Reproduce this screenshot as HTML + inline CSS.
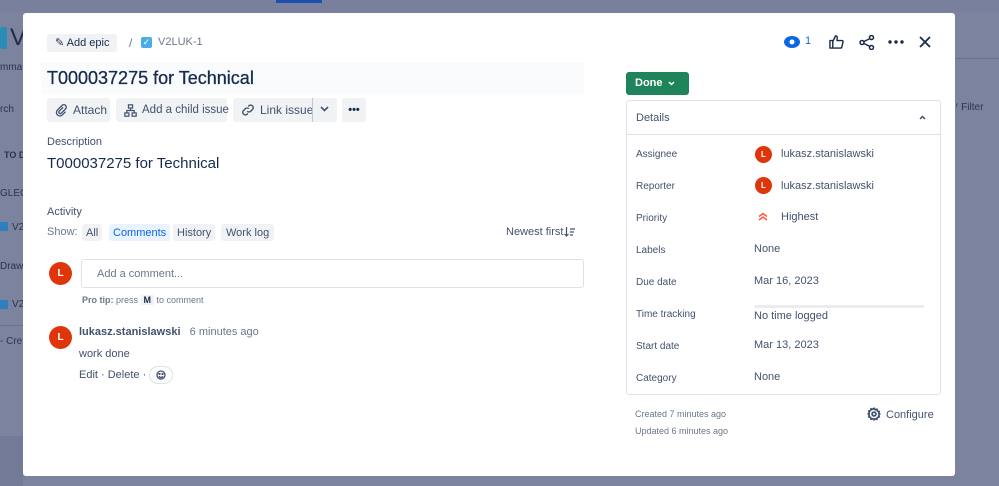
<!DOCTYPE html>
<html><head><style>
*{margin:0;padding:0;box-sizing:border-box}
body{width:999px;height:486px;overflow:hidden;background:#7c839f;font-family:"Liberation Sans",sans-serif;position:relative;color:#172b4d}
.a{position:absolute;white-space:nowrap}
.bg{color:#2a3350}
.modal{position:absolute;left:23px;top:13px;width:932px;height:463px;background:#fff;border-radius:3px}
.btn{position:absolute;background:#f1f2f4;border-radius:3px;font-size:12px;color:#42526e;height:24px;line-height:24px;white-space:nowrap;display:flex;align-items:center;gap:5px}
.btn svg{flex:none}
.lbl{position:absolute;left:636px;font-size:10px;color:#42526e}
.val{position:absolute;left:754px;font-size:11px;color:#42526e}
.av{position:absolute;width:17px;height:17px;border-radius:50%;background:#de350b;color:#fff;font-size:8px;font-weight:bold;text-align:center;line-height:17px}
</style></head><body>
<div class="a" style="left:0;top:0;width:999px;height:12px;background:#79809d"></div>
<div class="a" style="left:276px;top:0;width:46px;height:3px;background:#1d4fb0"></div>
<div class="a" style="left:0;top:27px;width:7px;height:22px;background:#2b8cb5;border-radius:2px"></div>
<div class="a bg" style="left:10px;top:24px;font-size:24px;color:#1f2a48">V</div>
<div class="a bg" style="left:0;top:62px;font-size:10px">mma</div>
<div class="a bg" style="left:0;top:104px;font-size:10px">rch</div>
<div class="a bg" style="left:4px;top:150px;font-size:9px;font-weight:bold">TO D</div>
<div class="a bg" style="left:0;top:188px;font-size:10px">GLEG</div>
<div class="a" style="left:0;top:222px;width:8px;height:9px;background:#2f7fc0"></div>
<div class="a bg" style="left:12px;top:222px;font-size:10px">V2</div>
<div class="a bg" style="left:0;top:261px;font-size:10px">Drawi</div>
<div class="a" style="left:0;top:300px;width:8px;height:9px;background:#2f7fc0"></div>
<div class="a bg" style="left:12px;top:299px;font-size:10px">V2</div>
<div class="a bg" style="left:0;top:336px;font-size:10px">- Cre</div>
<div class="a" style="left:0;top:325px;width:23px;height:1px;background:#6b7290"></div>
<div class="a" style="left:955px;top:58px;width:44px;height:1px;background:#6b7290"></div>
<div class="a bg" style="left:956px;top:102px;font-size:10px">ʳ Filter</div>
<div class="a" style="left:0;top:436px;width:23px;height:50px;background:#737a98"></div>

<div class="modal"></div>
<div class="btn" style="left:47px;top:34px;height:18px;padding:0 8px;font-size:11px;color:#172b4d">✎ Add epic</div>
<div class="a" style="left:129px;top:36px;font-size:12px;color:#6b778c">/</div>
<div class="a" style="left:141px;top:37px;width:11px;height:11px;background:#4bade8;border-radius:2px;color:#fff;font-size:9px;line-height:11px;text-align:center">✓</div>
<div class="a" style="left:158px;top:36px;font-size:11px;color:#6b778c">V2LUK-1</div>
<div class="a" style="left:41px;top:63px;width:543px;height:31px;background:#fafbfc"></div>
<div class="a" style="left:47px;top:68px;font-size:18px;color:#172b4d;-webkit-text-stroke:0.3px #172b4d">T000037275 for Technical</div>
<div class="btn" style="left:47px;top:98px;width:63px;padding-left:8px"><svg width="13" height="13" viewBox="0 0 16 16" fill="none" stroke="#42526e" stroke-width="1.6"><path d="M10 4L5 9a1.8 1.8 0 002.5 2.5l5.5-5.5a3 3 0 00-4.3-4.3L3 7.5a4.2 4.2 0 006 6l4-4"/></svg>Attach</div>
<div class="btn" style="left:116px;top:98px;width:111px;padding-left:8px;font-size:11.5px"><svg width="13" height="13" viewBox="0 0 16 16" fill="none" stroke="#42526e" stroke-width="1.5"><rect x="5.5" y="1" width="5" height="4"/><rect x="1" y="11" width="5" height="4"/><rect x="10" y="11" width="5" height="4"/><path d="M8 5v3M3.5 11V8h9v3"/></svg>Add a child issue</div>
<div class="btn" style="left:233px;top:98px;width:104px;padding-left:8px"><svg width="14" height="14" viewBox="0 0 16 16" fill="none" stroke="#42526e" stroke-width="1.6"><path d="M7 9.5a3 3 0 004 0l2.5-2.5a3 3 0 00-4-4.2L8.3 4M9 6.5a3 3 0 00-4 0L2.5 9a3 3 0 004 4.2L7.7 12"/></svg>Link issue</div>
<div class="a" style="left:312px;top:98px;width:1px;height:24px;background:#c1c7d0"></div>
<svg class="a" style="left:320px;top:106px" width="9" height="6" fill="none" stroke="#42526e" stroke-width="1.6"><path d="M1 1l3.5 3.5L8 1"/></svg>
<div class="btn" style="left:342px;top:98px;width:24px;justify-content:center;font-weight:bold;color:#172b4d;font-size:11px">•••</div>
<div class="a" style="left:47px;top:136px;font-size:11px;color:#42526e">Description</div>
<div class="a" style="left:47px;top:155px;font-size:15px;color:#172b4d">T000037275 for Technical</div>
<div class="a" style="left:47px;top:206px;font-size:11px;color:#42526e">Activity</div>
<div class="a" style="left:47px;top:226px;font-size:11px;color:#6b778c">Show:</div>
<div class="btn" style="left:82px;top:224px;height:17px;padding:0 4px;font-size:11px">All</div>
<div class="btn" style="left:109px;top:224px;height:17px;padding:0 4px;font-size:11px;background:#e9f2ff;color:#0c66e4">Comments</div>
<div class="btn" style="left:173px;top:224px;height:17px;padding:0 4px;font-size:11px">History</div>
<div class="btn" style="left:221px;top:224px;height:17px;padding:0 5px;font-size:11px">Work log</div>
<div class="a" style="left:506px;top:226px;font-size:11px;color:#42526e">Newest first</div>
<svg class="a" style="left:564px;top:227px" width="11" height="10" fill="none" stroke="#42526e" stroke-width="1.2"><path d="M2.5 0v9M0.5 7l2 2 2-2M6 2h5M6 5h4M6 8h3"/></svg>
<div class="av" style="left:49px;top:262px;width:23px;height:23px;line-height:23px;font-size:10px">L</div>
<div class="a" style="left:81px;top:259px;width:503px;height:29px;border:1px solid #dfe1e6;border-radius:3px"></div>
<div class="a" style="left:97px;top:268px;font-size:11px;color:#6b778c">Add a comment...</div>
<div class="a" style="left:82px;top:295px;font-size:9px;color:#6b778c"><b>Pro tip:</b> press <span style="background:#f1f2f4;padding:0 3px;font-weight:bold;color:#172b4d">M</span> to comment</div>
<div class="av" style="left:49px;top:326px;width:23px;height:23px;line-height:23px;font-size:10px">L</div>
<div class="a" style="left:79px;top:326px;font-size:11px;color:#42526e"><b>lukasz.stanislawski</b>&nbsp;&nbsp; <span style="color:#6b778c">6 minutes ago</span></div>
<div class="a" style="left:79px;top:348px;font-size:11px;color:#42526e">work done</div>
<div class="a" style="left:79px;top:369px;font-size:11px;color:#42526e">Edit · Delete ·</div>
<div class="a" style="left:149px;top:366px;width:24px;height:18px;border:1px solid #dfe1e6;border-radius:9px"></div>
<svg class="a" style="left:156px;top:370px" width="10" height="10" fill="none" stroke="#42526e" stroke-width="1.3"><circle cx="5" cy="5" r="4"/><path d="M3 6.2a2.2 2.2 0 004 0"/><circle cx="3.5" cy="4" r=".5"/><circle cx="6.5" cy="4" r=".5"/></svg>

<svg class="a" style="left:784px;top:35px" width="18" height="14"><ellipse cx="8" cy="7" rx="8" ry="6" fill="#0c66e4"/><circle cx="8" cy="7" r="2.5" fill="#fff"/></svg>
<div class="a" style="left:805px;top:35px;font-size:11px;color:#0c66e4">1</div>
<svg class="a" style="left:829px;top:34px" width="15" height="15" viewBox="0 0 16 16" fill="none" stroke="#172b4d" stroke-width="1.5" stroke-linejoin="round"><path d="M1 7h3v8H1zM4 8l3-6c1.5 0 2 1 1.8 2.5L8.5 7H14a1 1 0 011 1.2l-1.3 5.6a1.5 1.5 0 01-1.5 1.2H4"/></svg>
<svg class="a" style="left:859px;top:35px" width="16" height="15" fill="none" stroke="#172b4d" stroke-width="1.5"><circle cx="3" cy="7.5" r="2"/><circle cx="12.5" cy="2.5" r="2"/><circle cx="12.5" cy="12.5" r="2"/><path d="M5 6.5l6-3M5 8.5l6 3"/></svg>
<svg class="a" style="left:888px;top:40px" width="16" height="4" fill="#172b4d"><circle cx="2" cy="2" r="1.7"/><circle cx="8" cy="2" r="1.7"/><circle cx="14" cy="2" r="1.7"/></svg>
<svg class="a" style="left:919px;top:36px" width="12" height="12" stroke="#172b4d" stroke-width="1.8"><path d="M1 1l10 10M11 1L1 11"/></svg>

<div class="a" style="left:626px;top:72px;width:63px;height:23px;background:#1f845a;border-radius:3px;color:#fff;font-size:11px;font-weight:bold;line-height:23px;padding-left:9px">Done</div>
<svg class="a" style="left:668px;top:81px" width="7" height="5" fill="none" stroke="#fff" stroke-width="1.5"><path d="M1 1l2.5 2.5L6 1"/></svg>
<div class="a" style="left:626px;top:100px;width:315px;height:295px;border:1px solid #dfe1e6;border-radius:3px"></div>
<div class="a" style="left:626px;top:134px;width:315px;height:1px;background:#dfe1e6"></div>
<div class="a" style="left:636px;top:112px;font-size:11px;color:#42526e">Details</div>
<svg class="a" style="left:919px;top:115px" width="7" height="5" fill="none" stroke="#42526e" stroke-width="1.5"><path d="M1 4l2.5-2.5L6 4"/></svg>
<div class="lbl" style="top:149px">Assignee</div>
<div class="av" style="left:755px;top:146px">L</div><div class="val" style="left:781px;top:148px">lukasz.stanislawski</div>
<div class="lbl" style="top:181px">Reporter</div>
<div class="av" style="left:755px;top:177px">L</div><div class="val" style="left:781px;top:180px">lukasz.stanislawski</div>
<div class="lbl" style="top:213px">Priority</div>
<svg class="a" style="left:758px;top:212px" width="10" height="9" fill="none" stroke="#ff5630" stroke-width="1.5"><path d="M1 4.5l4-3 4 3M1 8l4-3 4 3"/></svg><div class="val" style="left:781px;top:211px">Highest</div>
<div class="lbl" style="top:245px">Labels</div><div class="val" style="top:243px">None</div>
<div class="lbl" style="top:277px">Due date</div><div class="val" style="top:275px">Mar 16, 2023</div>
<div class="lbl" style="top:309px">Time tracking</div>
<div class="a" style="left:754px;top:305px;width:170px;height:3px;background:#ebecf0;border-radius:2px"></div>
<div class="val" style="top:310px">No time logged</div>
<div class="lbl" style="top:341px">Start date</div><div class="val" style="top:339px">Mar 13, 2023</div>
<div class="lbl" style="top:373px">Category</div><div class="val" style="top:371px">None</div>
<div class="a" style="left:635px;top:409px;font-size:9px;color:#6b778c">Created 7 minutes ago</div>
<div class="a" style="left:635px;top:426px;font-size:9px;color:#6b778c">Updated 6 minutes ago</div>
<svg class="a" style="left:867px;top:407px" width="14" height="14" viewBox="0 0 16 16" fill="none" stroke="#42526e" stroke-width="2"><path d="M8 1.5l1.3 1.6 2-.5.6 2 2 .6-.5 2L14.5 8l-1.1 1.3.5 2-2 .6-.6 2-2-.5L8 14.5l-1.3-1.1-2 .5-.6-2-2-.6.5-2L1.5 8l1.1-1.3-.5-2 2-.6.6-2 2 .5z"/><circle cx="8" cy="8" r="2.2"/></svg>
<div class="a" style="left:886px;top:409px;font-size:11px;color:#42526e">Configure</div>
</body></html>
